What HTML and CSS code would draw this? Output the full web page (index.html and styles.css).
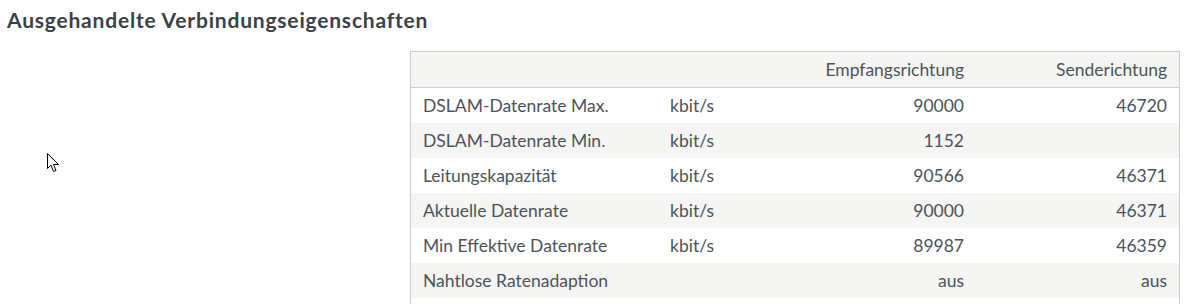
FILE: index.html
```html
<!DOCTYPE html>
<html lang="de">
<head>
<meta charset="utf-8">
<link rel="stylesheet" href="styles.css">
</head>
<body>
<h2 class="title">Ausgehandelte Verbindungseigenschaften</h2>
<div class="content">
  <table class="props">
    <thead>
      <tr><th class="c-label"></th><th class="c-unit"></th><th class="c-num c-down">Empfangsrichtung</th><th class="c-num">Senderichtung</th></tr>
    </thead>
    <tbody>
      <tr><td>DSLAM-Datenrate Max.</td><td>kbit/s</td><td class="c-num c-down">90000</td><td class="c-num">46720</td></tr>
      <tr><td>DSLAM-Datenrate Min.</td><td>kbit/s</td><td class="c-num c-down">1152</td><td class="c-num"></td></tr>
      <tr><td>Leitungskapazität</td><td>kbit/s</td><td class="c-num c-down">90566</td><td class="c-num">46371</td></tr>
      <tr><td>Aktuelle Datenrate</td><td>kbit/s</td><td class="c-num c-down">90000</td><td class="c-num">46371</td></tr>
      <tr><td>Min Effektive Datenrate</td><td>kbit/s</td><td class="c-num c-down">89987</td><td class="c-num">46359</td></tr>
      <tr><td>Nahtlose Ratenadaption</td><td></td><td class="c-num c-down">aus</td><td class="c-num">aus</td></tr>
      <tr class="spacer"><td></td><td></td><td class="c-down"></td><td></td></tr>
    </tbody>
  </table>
</div>
<svg class="cursor" width="13" height="20" viewBox="0 0 13 20"><path d="M0.5 0.5 L0.5 15.5 L4 12 L6.5 18.5 L9 17.5 L6.5 11.5 L11.5 11.5 Z" fill="#fff" stroke="#000" stroke-width="1" stroke-linejoin="miter"/></svg>
</body>
</html>
```
FILE: styles.css
```css
html, body {
  margin: 0;
  padding: 0;
  background: #fff;
}
body {
  font-family: "Lato", "Liberation Sans", sans-serif;
  color: #4b535a;
  width: 1200px;
  height: 304px;
  overflow: hidden;
  position: relative;
}
.title {
  margin: 0;
  padding: 8px 0 0 7px;
  height: 42px;
  box-sizing: border-box;
  font-size: 21px;
  font-weight: 700;
  letter-spacing: 0.8px;
  color: #3a4148;
  line-height: 24px;
}
.content {
  display: flex;
  justify-content: flex-end;
  padding: 9px 20px 0 0;
}
.props {
  width: 770px;
  border-collapse: collapse;
  border: 1px solid #c6ccd1;
  font-size: 17.5px;
}
.props thead tr {
  background: #f5f5f3;
}
.props thead th {
  font-weight: 400;
  border-bottom: 1px solid #c6ccd1;
}
.props th, .props td {
  padding: 0 12px;
  text-align: left;
  white-space: nowrap;
  height: 35px;
  line-height: 20px;
}
.props tbody tr:nth-child(even) {
  background: #f5f5f3;
}
.props .c-label { width: 223px; }
.props .c-unit { width: 110px; }
.props .c-num { text-align: right; }
.props .c-down { width: 160px; padding-right: 16px; }
.cursor {
  position: absolute;
  left: 47px;
  top: 153px;
}
```
